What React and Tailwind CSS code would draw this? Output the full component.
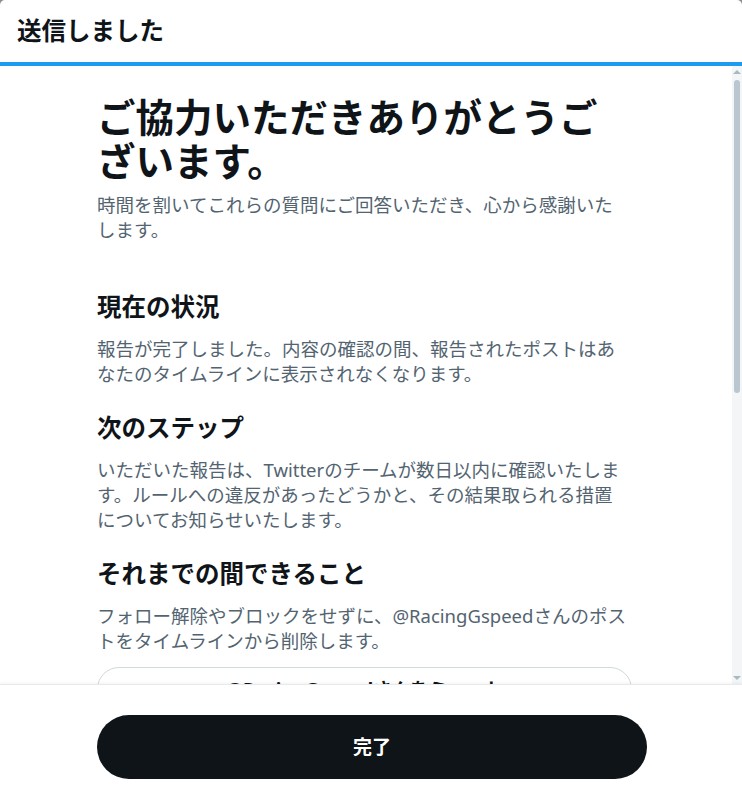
import React from "react";

const FONT = "font-['Noto_Sans','Noto_Sans_CJK_JP',sans-serif]";

function Section({ title, lines, className = "" }) {
  return (
    <div className={className}>
      <h2 className="text-[24.5px] leading-[30px] font-bold text-[#0f1419]">{title}</h2>
      <p className="mt-[14px] text-[18.5px] leading-[25px] text-[#536471] whitespace-nowrap">
        {lines.map((l, i) => (
          <React.Fragment key={i}>
            {l}
            {i < lines.length - 1 && <br />}
          </React.Fragment>
        ))}
      </p>
    </div>
  );
}

export default function App() {
  return (
    <div className={`w-[742px] h-[801px] bg-[#8c8c8c] ${FONT}`}>
      <div className="w-full h-full bg-white rounded-t-[5px] flex flex-col overflow-hidden">
        {/* Header */}
        <div className="h-[62px] flex items-center px-[17px] shrink-0">
          <h1 className="text-[24.5px] font-bold text-[#0f1419] leading-none">送信しました</h1>
        </div>
        <div className="h-[4px] bg-[#1d9bf0] shrink-0" />

        {/* Scroll area */}
        <div className="flex-1 flex min-h-0">
          <div className="flex-1 overflow-hidden">
            <div className="ml-[97px] w-[535px] pt-[29px]">
              <h1 className="text-[38.5px] leading-[44px] font-bold text-[#0f1419] whitespace-nowrap">
                ご協力いただきありがとうご
                <br />
                ざいます。
              </h1>
              <p className="mt-[9px] text-[18.5px] leading-[25px] text-[#536471] whitespace-nowrap">
                時間を割いてこれらの質問にご回答いただき、心から感謝いた
                <br />
                します。
              </p>

              <Section
                className="mt-[50px]"
                title="現在の状況"
                lines={[
                  "報告が完了しました。内容の確認の間、報告されたポストはあ",
                  "なたのタイムラインに表示されなくなります。",
                ]}
              />
              <Section
                className="mt-[27px]"
                title="次のステップ"
                lines={[
                  "いただいた報告は、Twitterのチームが数日以内に確認いたしま",
                  "す。ルールへの違反があったどうかと、その結果取られる措置",
                  "についてお知らせいたします。",
                ]}
              />
              <Section
                className="mt-[27px]"
                title="それまでの間できること"
                lines={[
                  "フォロー解除やブロックをせずに、@RacingGspeedさんのポス",
                  "トをタイムラインから削除します。",
                ]}
              />
              <button className="mt-[14px] w-[535px] h-[44px] rounded-full border border-[#cfd9de] bg-white text-[18.5px] font-bold text-[#0f1419] flex items-center justify-center">
                @RacingGspeedさんをミュート
              </button>
            </div>
          </div>
          {/* Scrollbar */}
          <div className="w-[10px] bg-[#f4f5f6] flex flex-col items-center shrink-0">
            <div className="mt-[4px] w-0 h-0 border-l-[4px] border-r-[4px] border-b-[4px] border-l-transparent border-r-transparent border-b-[#a9b9c4]" />
            <div className="mt-[6px] w-[6px] h-[313px] rounded-[3px] bg-[#bac7d0]" />
            <div className="mt-auto mb-[4px] w-0 h-0 border-l-[4px] border-r-[4px] border-t-[4px] border-l-transparent border-r-transparent border-t-[#a9b9c4]" />
          </div>
        </div>

        {/* Footer */}
        <div className="h-[117px] shrink-0 border-t border-[#e7eaec] shadow-[0_-1px_3px_rgba(0,0,0,0.05)] bg-white relative">
          <div className="pl-[97px] pt-[30px]">
            <button className="w-[550px] h-[64px] rounded-full bg-[#0f1419] text-white text-[19px] font-bold flex items-center justify-center">
              完了
            </button>
          </div>
        </div>
      </div>
    </div>
  );
}
